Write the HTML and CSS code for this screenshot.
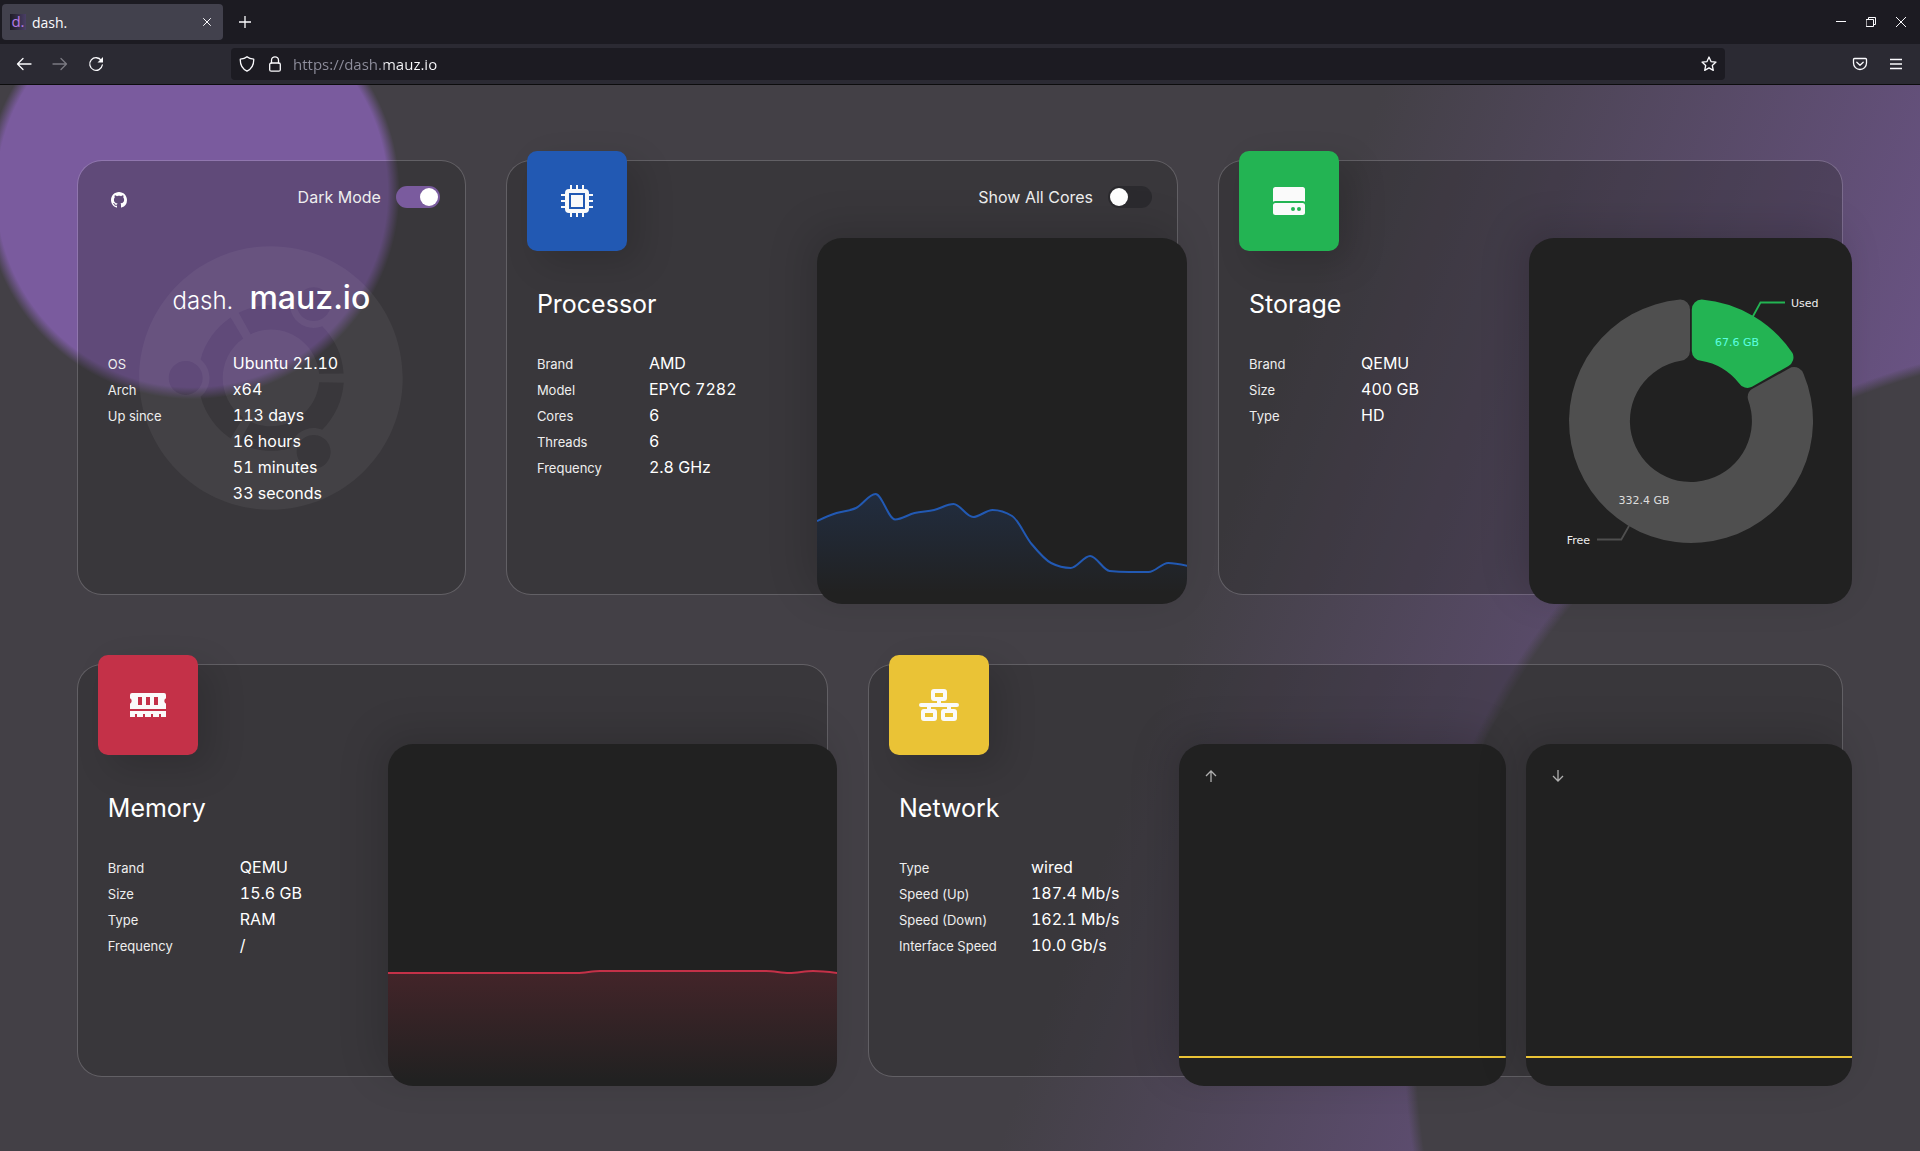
FILE: index.html
```html
<!DOCTYPE html>
<html lang="en">
<head>
<meta charset="utf-8">
<meta name="viewport" content="width=device-width, initial-scale=1">
<title>dash.</title>
<link rel="stylesheet" href="styles.css">
</head>
<body>
<header class="browser">
  <div class="tabbar">
    <div class="tab">
      <span class="favicon">d.</span>
      <span class="tab-title">dash.</span>
      <button class="tab-close" aria-label="Close tab"><svg width="8" height="8" viewBox="0 0 8 8"><path d="M.5.5l7 7M7.500.5l-7 7"/></svg></button>
    </div>
    <button class="chrome-btn new-tab" aria-label="New tab"><svg width="12" height="12" viewBox="0 0 12 12"><path d="M6 0v12M0 6h12"/></svg></button>
    <div class="window-controls">
      <button class="window-btn" aria-label="Minimize"><svg width="10" height="10" viewBox="0 0 10 10"><path d="M0 4.500h10"/></svg></button>
      <button class="window-btn" aria-label="Restore"><svg width="10" height="10" viewBox="0 0 10 10"><path d="M.5 2.500h7v7h-7zM2.500 2.500v-2h7v7h-2"/></svg></button>
      <button class="window-btn" aria-label="Close window"><svg width="10" height="10" viewBox="0 0 10 10"><path d="M0 0l10 10M10 0L0 10"/></svg></button>
    </div>
  </div>
  <nav class="navbar" aria-label="Browser">
    <button class="chrome-btn" aria-label="Back"><svg width="16" height="16" viewBox="0 0 16 16"><path d="M15 8H1.500M7 2.500L1.500 8 7 13.500"/></svg></button>
    <button class="chrome-btn dimmed" aria-label="Forward" disabled><svg width="16" height="16" viewBox="0 0 16 16"><path d="M1 8h13.500M9 2.500L14.500 8 9 13.500"/></svg></button>
    <button class="chrome-btn" aria-label="Reload"><svg width="16" height="16" viewBox="0 0 16 16"><path d="M13.300 4.500A6.300 6.300 0 1 0 14.300 9"/><path class="solid" d="M15 1v5.500H9.500z"/></svg></button>
    <div class="urlbar">
      <svg width="16" height="16" viewBox="0 0 16 16"><path d="M8 .8C6.500 2.200 4 3 1.300 3.100 1 9 3.300 13 8 15.200 12.700 13 15 9 14.700 3.100 12 3 9.500 2.200 8 .8z"/></svg>
      <svg width="16" height="16" viewBox="0 0 16 16"><rect x="2.700" y="7" width="10.600" height="8.200" rx="1.500"/><path d="M4.500 7V4.300a3.500 3.500 0 0 1 7 0V7"/></svg>
      <input class="url" type="text" aria-label="Address" value="https://dash.mauz.io">
      <button class="bookmark" aria-label="Bookmark"><svg width="16" height="16" viewBox="0 0 16 16"><path d="M8 1l2 4.600 5 .5-3.700 3.400 1 4.900L8 11.900l-4.300 2.500 1-4.900L1 6.100l5-.5z"/></svg></button>
    </div>
    <div class="nav-end">
      <button class="chrome-btn" aria-label="Save to Pocket"><svg width="16" height="16" viewBox="0 0 16 16"><path d="M2.500 2.500h11a1 1 0 0 1 1 1V7a6.500 6.500 0 0 1-13 0V3.500a1 1 0 0 1 1-1zM4.800 6.200L8 9.200l3.200-3"/></svg></button>
      <button class="chrome-btn" aria-label="Menu"><svg width="12" height="12" viewBox="0 0 12 12"><path d="M0 1.500h12M0 6h12M0 10.500h12"/></svg></button>
    </div>
  </nav>
</header>

<main class="dashboard">
  <div class="row row-top">
    <section class="card server">
      <svg class="os-logo" viewBox="0 0 496 512" aria-hidden="true"><path d="M248 8C111 8 0 119 0 256s111 248 248 248 248-111 248-248S385 8 248 8zm52.700 93c8.800-15.200 28.300-20.500 43.500-11.700 15.300 8.800 20.500 28.300 11.700 43.600-8.800 15.200-28.300 20.500-43.500 11.700-15.300-8.900-20.500-28.400-11.700-43.600zM87.400 287.900c-17.600 0-31.900-14.300-31.900-31.900 0-17.600 14.300-31.900 31.900-31.900 17.600 0 31.900 14.300 31.900 31.900 0 17.600-14.300 31.900-31.900 31.900zm28.100 3.100c22.300-17.900 22.400-51.900 0-69.900 8.600-32.800 29.100-60.700 56.500-79.100l23.700 39.600c-51.500 36.300-51.500 112.500 0 148.800L172 370c-27.400-18.300-47.800-46.300-56.500-79zm228.700 131.700c-15.300 8.800-34.700 3.600-43.500-11.700-8.800-15.300-3.600-34.800 11.700-43.600 15.200-8.800 34.700-3.600 43.500 11.700 8.800 15.300 3.600 34.800-11.700 43.600zm.3-69.500c-26.700-10.300-56.100 6.600-60.500 35-5.200 1.400-48.900 14.300-96.700-9.400l22.500-40.300c57 26.500 123.400-11.700 128.900-74.400l46.100.7c-2.300 34.500-17.300 65.500-40.300 88.400zm-5.900-105.300c-5.400-62-71.300-101.200-128.900-74.400l-22.500-40.300c47.900-23.700 91.500-10.800 96.700-9.400 4.400 28.300 33.800 45.300 60.500 35 23.100 22.900 38 53.900 40.200 88.500l-46 .6z"/></svg>
      <div class="server-bar">
        <a class="github" href="#" aria-label="GitHub"><svg width="16" height="16" viewBox="0 0 16 16"><path d="M8 0C3.580 0 0 3.580 0 8c0 3.540 2.290 6.530 5.470 7.590.4.070.55-.17.55-.38 0-.19-.01-.82-.01-1.490-2.010.37-2.530-.49-2.690-.94-.09-.23-.48-.94-.82-1.130-.28-.15-.68-.52-.01-.53.63-.01 1.080.58 1.230.82.72 1.210 1.870.87 2.330.66.07-.52.28-.87.51-1.070-1.780-.2-3.640-.89-3.640-3.950 0-.87.31-1.590.82-2.150-.08-.2-.36-1.020.08-2.120 0 0 .67-.21 2.200.82.64-.18 1.320-.27 2-.27s1.360.09 2 .27c1.530-1.040 2.200-.82 2.200-.82.44 1.100.16 1.920.08 2.120.51.56.82 1.270.82 2.150 0 3.070-1.870 3.750-3.650 3.950.29.25.54.73.54 1.480 0 1.070-.01 1.930-.01 2.200 0 .21.15.46.55.38A8.010 8.010 0 0 0 16 8c0-4.420-3.580-8-8-8z"/></svg></a>
        <label class="switch">Dark Mode <input type="checkbox" checked></label>
      </div>
      <h1 class="host"><span class="host-prefix">dash.</span> <span>mauz.io</span></h1>
      <table class="specs">
        <tr><th scope="row">OS</th><td>Ubuntu 21.10</td></tr>
        <tr><th scope="row">Arch</th><td>x64</td></tr>
        <tr><th scope="row">Up since</th><td>113 days<br>16 hours<br>51 minutes<br>33 seconds</td></tr>
      </table>
    </section>

    <section class="card">
      <div class="tile tile-blue"><svg width="32" height="32" viewBox="0 0 32 32"><path fill-rule="evenodd" d="M8 4h16a4 4 0 0 1 4 4v16a4 4 0 0 1-4 4H8a4 4 0 0 1-4-4V8a4 4 0 0 1 4-4zM8 8v16h16V8zM10 10h12v12H10z"/><path d="M9 0h2v4H9zM15 0h2v4h-2zM21 0h2v4h-2zM9 28h2v4H9zM15 28h2v4h-2zM21 28h2v4h-2zM0 9h4v2H0zM0 15h4v2H0zM0 21h4v2H0zM28 9h4v2h-4zM28 15h4v2h-4zM28 21h4v2h-4z"/></svg></div>
      <div class="info">
        <h2>Processor</h2>
        <table class="specs narrow">
          <tr><th scope="row">Brand</th><td>AMD</td></tr>
          <tr><th scope="row">Model</th><td>EPYC 7282</td></tr>
          <tr><th scope="row">Cores</th><td>6</td></tr>
          <tr><th scope="row">Threads</th><td>6</td></tr>
          <tr><th scope="row">Frequency</th><td>2.8 GHz</td></tr>
        </table>
      </div>
      <div class="visual">
        <div class="visual-bar"><label class="switch">Show All Cores <input type="checkbox"></label></div>
        <div class="charts">
          <div class="chart">
            <svg class="plot" viewBox="0 0 370 366" preserveAspectRatio="none">
              <defs><linearGradient id="cpu" x1="0" y1="0" x2="0" y2="1"><stop offset=".05" stop-color="#2259b3" stop-opacity=".2"/><stop offset=".9" stop-color="#2259b3" stop-opacity="0"/></linearGradient></defs>
              <path fill="url(#cpu)" d="M0 283C6.500 280 13 277.200 19.500 275S32.500 273.200 39 270S52 256 58.500 256S71.500 281.500 78 281.500S91 276.600 97.500 275S110.500 273.500 117 272S130 266 136.500 266S149.500 279 156 279S169 272 175.500 272S188.500 274 195 278S208 298.200 214.500 306S227.500 321.700 234 325S247 330 253.500 330S266.500 318 273 318S286 332.300 292.500 333S305.500 334 312 334S325 334 331.500 334S344.500 325 351 325S364 326.500 370.500 328V366H0z"/>
              <path class="line blue" d="M0 283C6.500 280 13 277.200 19.500 275S32.500 273.200 39 270S52 256 58.500 256S71.500 281.500 78 281.500S91 276.600 97.500 275S110.500 273.500 117 272S130 266 136.500 266S149.500 279 156 279S169 272 175.500 272S188.500 274 195 278S208 298.200 214.500 306S227.500 321.700 234 325S247 330 253.500 330S266.500 318 273 318S286 332.300 292.500 333S305.500 334 312 334S325 334 331.500 334S344.500 325 351 325S364 326.500 370.500 328"/>
            </svg>
          </div>
        </div>
      </div>
    </section>

    <section class="card">
      <div class="tile tile-green"><svg width="32" height="28" viewBox="0 0 32 28"><path d="M2.500 0h27A2.500 2.500 0 0 1 32 2.500v12.200Q31 14 29.500 14h-27Q1 14 0 14.700V2.500A2.500 2.500 0 0 1 2.500 0z"/><path fill-rule="evenodd" d="M2.500 16h27a2.500 2.500 0 0 1 2.500 2.500v7a2.500 2.500 0 0 1-2.500 2.500h-27A2.500 2.500 0 0 1 0 25.500v-7A2.500 2.500 0 0 1 2.500 16zM20 20a2 2 0 1 0 0 4 2 2 0 0 0 0-4zM26 20a2 2 0 1 0 0 4 2 2 0 0 0 0-4z"/></svg></div>
      <div class="info">
        <h2>Storage</h2>
        <table class="specs narrow">
          <tr><th scope="row">Brand</th><td>QEMU</td></tr>
          <tr><th scope="row">Size</th><td>400 GB</td></tr>
          <tr><th scope="row">Type</th><td>HD</td></tr>
        </table>
      </div>
      <div class="visual">
        <div class="visual-bar"></div>
        <div class="charts">
          <div class="chart">
            <svg class="pie" width="290" height="260" viewBox="-145 -130 290 260">
              <path fill="#4f4f4f" d="M100.300-53.700A10 10 0 0 1 112.600-47A122 122 0 1 1-10.700-121.500A10 10 0 0 1-1-111.500V-70A10 10 0 0 1-10-60.200A61 61 0 1 0 57-21.500A10 10 0 0 1 61-32z"/>
              <path fill="#23b453" d="M.8-111.500A10 10 0 0 1 10.700-121.500A122 122 0 0 1 101.500-67.900A10 10 0 0 1 97.500-55L61-34.200A10 10 0 0 1 48-37.700A61 61 0 0 0 10-60.200A10 10 0 0 1 .8-70z"/>
              <path class="callout" stroke="#23b453" d="M61.700-104.300L69.500-118.500H94"/>
              <path class="callout" stroke="#4f4f4f" d="M-62 105L-69.700 118.500H-94"/>
              <text x="100" y="-114" fill="#eee">Used</text>
              <text x="46" y="-75" text-anchor="middle" fill="#5bffe0">67.6 GB</text>
              <text x="-47" y="83" text-anchor="middle" fill="#ddd">332.4 GB</text>
              <text x="-101" y="123" text-anchor="end" fill="#eee">Free</text>
            </svg>
          </div>
        </div>
      </div>
    </section>
  </div>

  <div class="row row-bottom">
    <section class="card">
      <div class="tile tile-red"><svg width="36" height="24" viewBox="0 0 36 24"><path fill-rule="evenodd" d="M2 0h32a2 2 0 0 1 2 2v3.300a3 3 0 0 0 0 5.400V16H0v-5.300a3 3 0 0 0 0-5.400V2a2 2 0 0 1 2-2zM8 4v8h4V4zM16 4v8h4V4zM24 4v8h4V4z"/><path d="M0 18h36v6h-5v-3h-2v3h-6v-3h-2v3h-6v-3h-2v3H7v-3H5v3H0z"/></svg></div>
      <div class="info">
        <h2>Memory</h2>
        <table class="specs wide">
          <tr><th scope="row">Brand</th><td>QEMU</td></tr>
          <tr><th scope="row">Size</th><td>15.6 GB</td></tr>
          <tr><th scope="row">Type</th><td>RAM</td></tr>
          <tr><th scope="row">Frequency</th><td>/</td></tr>
        </table>
      </div>
      <div class="visual">
        <div class="visual-bar"></div>
        <div class="charts">
          <div class="chart">
            <svg class="plot" viewBox="0 0 449 342" preserveAspectRatio="none">
              <defs><linearGradient id="ram" x1="0" y1="0" x2="0" y2="1"><stop offset=".05" stop-color="#c43148" stop-opacity=".2"/><stop offset=".95" stop-color="#c43148" stop-opacity="0"/></linearGradient></defs>
              <path fill="url(#ram)" d="M0 229H189C197 229 204 227 212 227H378C386 227 393 229 401 229S417 227 425 227S441 228 449 229V342H0z"/>
              <path class="line red" d="M0 229H189C197 229 204 227 212 227H378C386 227 393 229 401 229S417 227 425 227S441 228 449 229"/>
            </svg>
          </div>
        </div>
      </div>
    </section>

    <section class="card">
      <div class="tile tile-yellow"><svg width="40" height="32" viewBox="0 0 40 32"><path fill-rule="evenodd" d="M15 0h10a3 3 0 0 1 3 3v6a3 3 0 0 1-3 3h-3v2h16a2 2 0 0 1 0 4h-6v2h3a3 3 0 0 1 3 3v6a3 3 0 0 1-3 3H25a3 3 0 0 1-3-3v-6a3 3 0 0 1 3-3h3v-2H12v2h3a3 3 0 0 1 3 3v6a3 3 0 0 1-3 3H5a3 3 0 0 1-3-3v-6a3 3 0 0 1 3-3h3v-2H2a2 2 0 0 1 0-4h16v-2h-3a3 3 0 0 1-3-3V3a3 3 0 0 1 3-3zM16 4v4h8V4zM6 24v4h8v-4zM26 24v4h8v-4z"/></svg></div>
      <div class="info">
        <h2>Network</h2>
        <table class="specs wide">
          <tr><th scope="row">Type</th><td>wired</td></tr>
          <tr><th scope="row">Speed (Up)</th><td>187.4 Mb/s</td></tr>
          <tr><th scope="row">Speed (Down)</th><td>162.1 Mb/s</td></tr>
          <tr><th scope="row">Interface Speed</th><td>10.0 Gb/s</td></tr>
        </table>
      </div>
      <div class="visual">
        <div class="visual-bar"></div>
        <div class="charts">
          <div class="chart">
            <svg class="direction" width="12" height="12" viewBox="0 0 12 12"><path d="M6 12V1M1 6l5-5 5 5"/></svg>
            <svg class="plot" viewBox="0 0 326 342" preserveAspectRatio="none"><path class="line yellow" d="M0 313H326"/></svg>
          </div>
          <div class="chart">
            <svg class="direction" width="12" height="12" viewBox="0 0 12 12"><path d="M6 0v11M1 6l5 5 5-5"/></svg>
            <svg class="plot" viewBox="0 0 326 342" preserveAspectRatio="none"><path class="line yellow" d="M0 313H326"/></svg>
          </div>
        </div>
      </div>
    </section>
  </div>
</main>
</body>
</html>
```
FILE: styles.css
```css
* {
  box-sizing: border-box;
}

body {
  margin: 0;
  min-height: 100vh;
  display: flex;
  flex-direction: column;
  background: #434046;
  color: #fff;
  font-family: Inter, "Liberation Sans", sans-serif;
  font-size: 16px;
}

button {
  padding: 0;
  border: 0;
  background: none;
  color: inherit;
  display: flex;
  align-items: center;
  justify-content: center;
}

/* Browser chrome */
.browser {
  flex: none;
  border-bottom: 1px solid #0c0c0d;
  background: #2b2a33;
  color: #fbfbfe;
  font-family: "Open Sans", "Noto Sans", sans-serif;
  font-size: 14px;
}

.browser svg {
  flex: none;
  fill: none;
  stroke: currentColor;
  stroke-width: 1.3;
  stroke-linecap: round;
  stroke-linejoin: round;
}

.browser .solid {
  fill: currentColor;
  stroke: none;
}

.tabbar {
  display: flex;
  align-items: center;
  height: 44px;
  padding-left: 2px;
  background: #1c1b22;
}

.tab {
  display: flex;
  align-items: center;
  width: 221px;
  height: 36px;
  padding: 0 8px;
  border-radius: 4px;
  background: #42414d;
}

.favicon {
  width: 16px;
  height: 16px;
  background: linear-gradient(90deg, #1f1c26, #4a3f66);
  color: #b57ae6;
  font-size: 15px;
  line-height: 15px;
  text-align: center;
}

.tab-title {
  flex: 1;
  margin-left: 6px;
}

.tab-close {
  width: 16px;
  height: 16px;
}

.browser .tab-close svg,
.browser .window-btn svg {
  stroke-width: 1;
}

.chrome-btn {
  width: 36px;
  height: 32px;
}

.new-tab {
  margin-left: 4px;
}

.dimmed {
  color: #7b7a82;
}

.window-controls {
  display: flex;
  margin-left: auto;
  padding-right: 4px;
}

.window-btn {
  width: 30px;
  height: 30px;
}

.navbar {
  display: flex;
  align-items: center;
  height: 40px;
  padding: 0 6px;
}

.urlbar {
  flex: 1;
  display: flex;
  align-items: center;
  gap: 12px;
  height: 32px;
  margin: 0 117px;
  padding: 0 8px;
  border-radius: 4px;
  background: #1c1b22;
}

.url {
  flex: 1;
  min-width: 0;
  margin-left: -2px;
  padding: 0;
  border: 0;
  outline: 0;
  background: linear-gradient(90deg, #8f8f9d 91px, #fbfbfe 91px);
  -webkit-background-clip: text;
  background-clip: text;
  color: transparent;
  font: inherit;
  font-size: 15px;
}

.nav-end {
  display: flex;
}

/* Dashboard */
.dashboard {
  flex: 1;
  display: grid;
  grid-template-rows: 435fr 413fr;
  gap: 69px;
  padding: 75px 4% 74px;
  background:
    radial-gradient(circle at 10% 10%, #7a5b9e 9.9%, transparent 10.5%),
    radial-gradient(circle at 110% 90%, #434046 30%, transparent 30.5%),
    linear-gradient(290deg, #7a5b9e 0%, #434046 40%);
}

.row {
  display: grid;
  gap: 40px;
}

.row-top {
  grid-template-columns: 389fr 672fr 625fr;
}

.row-bottom {
  grid-template-columns: 751fr 975fr;
}

.card {
  position: relative;
  display: flex;
  border: 1px solid rgba(255, 255, 255, 0.17);
  border-radius: 25px;
  background: rgba(36, 36, 36, 0.3);
  background-clip: padding-box;
}

.tile {
  position: absolute;
  top: -10px;
  left: 20px;
  display: flex;
  align-items: center;
  justify-content: center;
  width: 100px;
  height: 100px;
  border-radius: 10px;
  box-shadow: 13px 13px 35px rgba(0, 0, 0, 0.15);
}

.tile svg {
  fill: #fafafa;
}

.tile-blue {
  background: #2259b3;
}

.tile-green {
  background: #23b453;
}

.tile-red {
  background: #c43148;
}

.tile-yellow {
  background: #eac336;
}

.info {
  flex: none;
  width: 310px;
  padding: 127px 0 0 30px;
}

h2 {
  margin: 0 0 30px;
  font-size: 25px;
  font-weight: 400;
  line-height: 32px;
}

.specs {
  border-collapse: collapse;
  font-variant-numeric: tabular-nums;
  line-height: 26px;
}

.specs th,
.specs td {
  padding: 0;
  text-align: left;
  vertical-align: baseline;
}

.specs th {
  width: 125px;
  font-size: 13px;
  font-weight: 400;
  line-height: 20px;
  color: #eee;
}

.specs.narrow th {
  width: 112px;
}

.specs.wide th {
  width: 132px;
}

/* Server card */
.server {
  flex-direction: column;
  padding: 0 30px;
}

.server > :not(.os-logo) {
  position: relative;
}

.os-logo {
  position: absolute;
  inset: 0;
  width: 272px;
  height: 272px;
  margin: auto;
  fill: rgba(255, 255, 255, 0.05);
}

.server-bar {
  display: flex;
  align-items: center;
  justify-content: space-between;
  height: 78px;
  margin-right: -5px;
}

.github {
  display: flex;
  margin-left: 3px;
  fill: #fff;
}

.host {
  display: flex;
  align-items: baseline;
  justify-content: center;
  gap: 16px;
  margin: 39px 0 32px;
  font-size: 32px;
  font-weight: 500;
  line-height: 40px;
}

.host-prefix {
  font-size: 24px;
  font-weight: 300;
  line-height: 32px;
}

.switch {
  display: flex;
  align-items: center;
  gap: 15px;
  margin-bottom: 6px;
  color: #eee;
}

.switch input {
  appearance: none;
  display: flex;
  width: 44px;
  height: 22px;
  margin: 0;
  padding: 2px;
  border-radius: 11px;
  background: #2b2a2e;
}

.switch input::before {
  content: "";
  width: 18px;
  height: 18px;
  border-radius: 50%;
  background: #fff;
}

.switch input:checked {
  justify-content: flex-end;
  background: #7a5b9e;
}

/* Charts overhang the card's right and bottom edges */
.visual {
  flex: 1;
  min-width: 0;
  display: flex;
  flex-direction: column;
  margin: 0 -10px -10px 0;
}

.visual-bar {
  display: flex;
  align-items: center;
  justify-content: flex-end;
  height: 77px;
  padding-right: 35px;
}

.row-bottom .visual-bar {
  height: 79px;
}

.charts {
  flex: 1;
  display: flex;
  gap: 20px;
}

.chart {
  position: relative;
  flex: 1;
  min-width: 0;
  display: flex;
  align-items: center;
  justify-content: center;
  overflow: hidden;
  border-radius: 25px;
  background: #212121;
  box-shadow: -10px -10px 40px rgba(0, 0, 0, 0.15);
}

.plot {
  position: absolute;
  inset: 0;
  width: 100%;
  height: 100%;
}

.line {
  fill: none;
  stroke-width: 2;
  vector-effect: non-scaling-stroke;
}

.blue {
  stroke: #2259b3;
}

.red {
  stroke: #c43148;
}

.yellow {
  stroke: #eac336;
}

.direction {
  position: absolute;
  top: 26px;
  left: 26px;
  fill: none;
  stroke: #b0b0b0;
  stroke-width: 1.3;
}

.pie {
  flex: none;
  overflow: visible;
  font-family: "DejaVu Sans", sans-serif;
  font-size: 11px;
}

.callout {
  fill: none;
  stroke-width: 1.8;
}
```
